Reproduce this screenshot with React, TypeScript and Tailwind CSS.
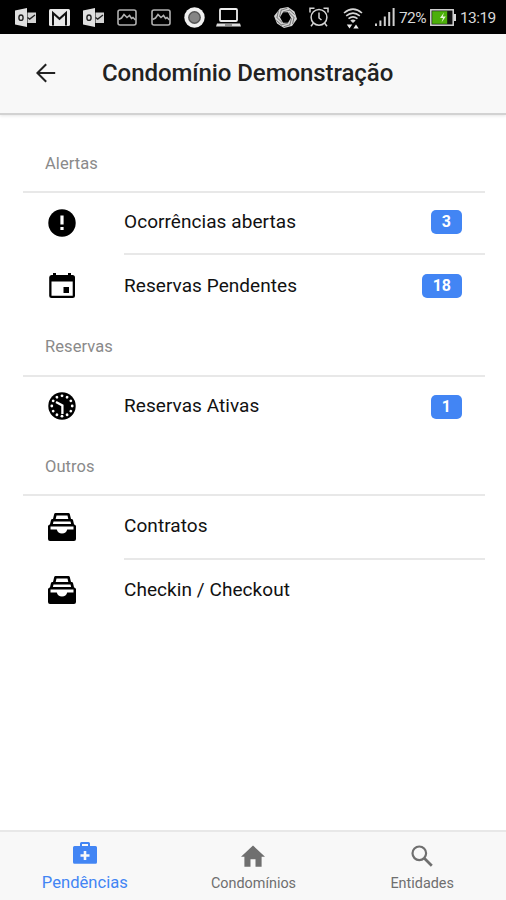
import type { ComponentType, ReactNode } from 'react';
import clsx from 'clsx';

type IconProps = { className?: string };

/* ---------- Status bar icons ---------- */

function OutlookIcon({ className }: IconProps) {
  return (
    <svg viewBox="0 0 21 19" className={className} fill="none">
      <path d="M0 2.5 12 0v19L0 16.5z" fill="#e0e0e0" />
      <path d="M12.5 4.5H21V15h-8.5z" fill="#d4d4d4" />
      <path d="m12.5 9.5 2.2 1.6L20 7" stroke="#222" strokeWidth="1.3" />
      <ellipse cx="6" cy="9.7" rx="2.1" ry="2.7" stroke="#222" strokeWidth="1.4" />
    </svg>
  );
}

function MailIcon({ className }: IconProps) {
  return (
    <svg viewBox="0 0 21 17" className={className}>
      <rect width="21" height="17" rx="1.5" fill="#e8e8e8" />
      <path d="M4 16.5V4l6.5 5.8L17 4v12.5" fill="none" stroke="#111" strokeWidth="2" />
    </svg>
  );
}

function PictureIcon({ className }: IconProps) {
  return (
    <svg viewBox="0 0 20 17" className={className} fill="none" stroke="#b0b0b0" strokeWidth="1.6">
      <rect x="1" y="1" width="18" height="15" rx="2" />
      <path d="m1.5 10.5 3-1.5L7 5.500l3 3 2.500-2 2 3 1.500-1 2.500 2.500" />
    </svg>
  );
}

function RecordIcon({ className }: IconProps) {
  return (
    <svg viewBox="0 0 21 21" className={className}>
      <circle cx="10.5" cy="10.5" r="10.2" fill="#f0f0f0" />
      <circle cx="10.5" cy="10.5" r="6.4" fill="#555" />
      <circle cx="10.5" cy="10.5" r="5" fill="#858585" />
    </svg>
  );
}

function LaptopIcon({ className }: IconProps) {
  return (
    <svg viewBox="0 0 25 19" className={className}>
      <rect x="4" y="1" width="17" height="12" rx="1" fill="none" stroke="#eee" strokeWidth="1.8" />
      <path d="M1 15.5h23l1 3H0z" fill="#ddd" />
      <path d="M9 17h7" stroke="#444" />
    </svg>
  );
}

const blades = [0, 60, 120, 180, 240, 300];

function ApertureIcon({ className }: IconProps) {
  return (
    <svg viewBox="0 0 23 21" className={className} fill="none">
      <path
        fillRule="evenodd"
        d="M6 1.500 14 0l6.500 4.500L23 12l-5 7-8 2-7-4.500L0 9zM9 5.200l-3 5L9 15.800h5l3-5-3-5.600z"
        fill="#d4d4d4"
      />
      {blades.map((deg) => (
        <path
          key={deg}
          d="M7 3.200 13.500 1.200M9 5l7-2"
          stroke="#555"
          strokeWidth="0.7"
          transform={`rotate(${deg} 11.5 10.5)`}
        />
      ))}
    </svg>
  );
}

function AlarmIcon({ className }: IconProps) {
  return (
    <svg viewBox="0 0 20 20" className={className} fill="none" stroke="#d4d4d4" strokeWidth="1.5">
      <circle cx="10" cy="10.3" r="7.9" />
      <path d="M10 5.500V11l2.500 2M1 5.5V1.200h4.500M19 5.5V1.200h-4.500M4.500 16 2 19.200M15.500 16l2.500 3.200" />
    </svg>
  );
}

function WifiIcon({ className }: IconProps) {
  return (
    <svg viewBox="0 0 20 21" className={className} fill="none" stroke="#d6d6d6" strokeWidth="1.6">
      <path d="M1 5Q10-2.800 19 5M3.200 7.900q6.800-5.600 13.600 0M5.500 10.700q4.500-3.600 9 0" />
      <path d="m7.300 12.500 2.700 2.500 2.700-2.500q-2.700-1.800-5.400 0z" fill="#d6d6d6" stroke="none" />
      <path d="M3.800 16.500h5.400L6.500 20.500zM10.300 20.500h5.400L13 16.500z" fill="#eee" stroke="none" />
    </svg>
  );
}

function SignalIcon({ className }: IconProps) {
  return (
    <svg viewBox="0 0 20 18" className={className} fill="#d0d0d0">
      <path d="M0 15.500h2V18H0zM4.400 12.500h2V18h-2zM8.800 8.500h2V18h-2zM13.200 4h2v14h-2zM17.600 0h2v18h-2z" />
    </svg>
  );
}

function BatteryIcon({ className }: IconProps) {
  return (
    <svg viewBox="0 0 26 17" className={className}>
      <rect x="0.8" y="0.8" width="22.4" height="15.4" fill="#111" stroke="#d8d8d8" strokeWidth="1.5" />
      <path d="M24 5h2v7h-2z" fill="#d8d8d8" />
      <path d="M2.200 2.200h15v12.600h-15z" fill="#4caf0a" />
      <path d="m14 3.500-4 5.500h3l-1.500 4.500 4.300-6h-3z" fill="#e8f5d8" />
    </svg>
  );
}

/* ---------- Page icons ---------- */

function BackIcon({ className }: IconProps) {
  return (
    <svg viewBox="0 0 20 20" className={className} fill="none" stroke="#222" strokeWidth="2">
      <path d="M19.200 10H2M10.200 1.200 1.400 10l8.800 8.800" />
    </svg>
  );
}

function AlertIcon({ className }: IconProps) {
  return (
    <svg viewBox="0 0 28 28" className={className}>
      <circle cx="14" cy="14" r="13.7" fill="#000" />
      <path d="M12.400 6.500h3.200v9h-3.200zM12.400 18h3.200v3h-3.200z" fill="#fff" />
    </svg>
  );
}

function CalendarIcon({ className }: IconProps) {
  return (
    <svg viewBox="0 0 28 28" className={className}>
      <path
        fillRule="evenodd"
        d="M5 1h3v2h12V1h3v2h1.500Q27 3 27 5.500v18.500q0 2-2.300 2H3.500q-2.300 0-2.300-2V5.500Q1.200 3 3.500 3H5zM3.500 9.500v14.200h21.200V9.500z"
        fill="#000"
      />
      <path d="M15.500 15H21v6h-5.500z" fill="#000" />
    </svg>
  );
}

const clockTicks = [0, 30, 60, 90, 120, 150, 180, 210, 240, 270, 300, 330];

function ClockIcon({ className }: IconProps) {
  return (
    <svg viewBox="0 0 28 28" className={className}>
      <circle cx="14" cy="14" r="13.7" fill="#000" />
      {clockTicks.map((deg) => (
        <circle key={deg} cx="14" cy="3.8" r="1.4" fill="#fff" transform={`rotate(${deg} 14 14)`} />
      ))}
      <path d="M14.400 22v-8.600L8 10" fill="none" stroke="#fff" strokeWidth="2.3" />
    </svg>
  );
}

function TrayIcon({ className }: IconProps) {
  return (
    <svg viewBox="0 0 28 28" className={className}>
      <path
        fillRule="evenodd"
        d="M7.500 0h13q1 0 1.300 1l1.200 5h.7q1 0 1.300 1l1 4.200 2 1.500V26q0 2-2 2H2q-2 0-2-2V12.700l2-1.500L3 7q.3-1 1.300-1H5l1.200-5Q6.500 0 7.500 0zM8.500 2.500 7.700 6h12.600l-.8-3.500zM5.500 8.500 4.900 11h18.200l-.6-2.500zM2.500 13.600v3h6.300q1 4 5.200 4t5.200-4h6.300v-3z"
        fill="#000"
      />
    </svg>
  );
}

function MedkitIcon({ className }: IconProps) {
  return (
    <svg viewBox="0 0 24 22" className={className}>
      <path
        fillRule="evenodd"
        d="M8.500 0h7q1.500 0 1.500 1.500V4h5.500Q24 4 24 5.500v14.700q0 1.600-1.500 1.600h-21Q0 21.800 0 20.200V5.500Q0 4 1.500 4H7V1.500Q7 0 8.500 0zM9 2v2h6V2zM10.700 9v3.200H7.500v2.600h3.200V18h2.600v-3.200h3.200v-2.600h-3.200V9z"
        fill="currentColor"
      />
    </svg>
  );
}

function HomeIcon({ className }: IconProps) {
  return (
    <svg viewBox="0 0 24 22" className={className}>
      <path d="M12 .5 0 11.700h3.400v10H9.500v-7.500h5v7.500h6.100v-10H24z" fill="currentColor" />
    </svg>
  );
}

function SearchIcon({ className }: IconProps) {
  return (
    <svg viewBox="0 0 22 22" className={className} fill="none" stroke="currentColor">
      <circle cx="8.3" cy="8.3" r="6.8" strokeWidth="2.2" />
      <path d="m13.300 13.300 7.500 7.500" strokeWidth="2.7" />
    </svg>
  );
}

/* ---------- Layout ---------- */

function StatusBar() {
  return (
    <div className="flex h-[34px] shrink-0 items-center justify-between bg-black pl-[15px] pr-[10px] text-[#d8d8d8]">
      <div className="flex items-center">
        <OutlookIcon className="h-[19px] w-[21px]" />
        <MailIcon className="ml-[13px] h-[17px] w-[21px]" />
        <OutlookIcon className="ml-[13px] h-[19px] w-[21px]" />
        <PictureIcon className="ml-[13px] h-[17px] w-5" />
        <PictureIcon className="ml-[14px] h-[17px] w-5" />
        <RecordIcon className="ml-[13px] h-[21px] w-[21px]" />
        <LaptopIcon className="ml-[11px] h-[19px] w-[25px]" />
      </div>
      <div className="flex items-center">
        <ApertureIcon className="h-[21px] w-[23px]" />
        <AlarmIcon className="ml-3 h-5 w-5" />
        <WifiIcon className="ml-[14px] mt-0.5 h-[21px] w-5" />
        <SignalIcon className="ml-3 h-[18px] w-5" />
        <span className="ml-1 w-[31px] pt-[3px] text-[15.5px] tracking-[-0.6px]">72%</span>
        <BatteryIcon className="h-[17px] w-[26px]" />
        <span className="ml-[4px] w-[36px] pt-[3px] text-[15.5px] tracking-[-0.6px]">13:19</span>
      </div>
    </div>
  );
}

interface RowProps {
  icon: ComponentType<IconProps>;
  label: string;
  count?: number;
  divider?: boolean;
  className: string;
}

function Row({ icon: Icon, label, count, divider, className }: RowProps) {
  return (
    <div className={clsx('flex', className)}>
      <div className="flex w-[101px] items-center pb-[3px] pl-[25px]">
        <Icon className="h-7 w-7" />
      </div>
      <div
        className={clsx(
          'flex flex-1 items-center justify-between pr-[23px]',
          divider && 'border-b-2 border-[#e8e8e8]'
        )}
      >
        <span className="pb-[2px] text-[19px] tracking-[0.06px] text-[#111]">{label}</span>
        {count !== undefined && (
          <span className="mb-[2px] rounded-[5px] bg-[#4285f4] px-[11px] text-center text-[16px] leading-[24px] font-bold text-white">
            {count}
          </span>
        )}
      </div>
    </div>
  );
}

function Group({ title, className, children }: { title: string; className: string; children: ReactNode }) {
  return (
    <section>
      <h2
        className={clsx(
          'flex items-center border-b-2 border-[#e8e8e8] pl-[22px] text-[16.5px] tracking-[0.08px] text-[#8a8a8a]',
          className
        )}
      >
        {title}
      </h2>
      {children}
    </section>
  );
}

export default function App() {
  return (
    <div className="flex h-[900px] w-[506px] flex-col overflow-hidden bg-white font-[Roboto,sans-serif]">
      <StatusBar />

      <header className="z-10 flex h-[81px] shrink-0 items-center border-b-2 border-[#d2d2d2] bg-[#f8f8f8] pb-[2px] pl-9 shadow-[0_1px_3px_rgba(0,0,0,0.1)]">
        <BackIcon className="h-5 w-5" />
        <h1 className="ml-[46px] text-[24px] font-medium tracking-[-0.07px] text-[#222]">Condomínio Demonstração</h1>
      </header>

      <main className="flex-1 pt-[19px] pr-[21px] pl-[23px]">
        <Group title="Alertas" className="h-[59px] pt-1">
          <Row icon={AlertIcon} label="Ocorrências abertas" count={3} divider className="h-[62px]" />
          <Row icon={CalendarIcon} label="Reservas Pendentes" count={18} className="h-[63px] pt-px" />
        </Group>
        <Group title="Reservas" className="h-[59px] pt-0.5">
          <Row icon={ClockIcon} label="Reservas Ativas" count={1} className="h-[61px]" />
        </Group>
        <Group title="Outros" className="h-[58px] pt-0.5">
          <Row icon={TrayIcon} label="Contratos" divider className="h-[64px]" />
          <Row icon={TrayIcon} label="Checkin / Checkout" className="h-[63px]" />
        </Group>
      </main>

      <nav className="grid h-[70px] shrink-0 grid-cols-3 border-t-2 border-[#e8e8e8] bg-[#f8f8f8] text-[#6f6f6f]">
        <a className="flex flex-col items-center pt-[10px] pl-px text-[#4285f4]">
          <MedkitIcon className="h-[22px] w-6" />
          <span className="mt-[9px] text-[16.6px] leading-5">Pendências</span>
        </a>
        <a className="flex flex-col items-center pt-[13px] pl-px">
          <HomeIcon className="h-[22px] w-6" />
          <span className="mt-[7px] text-[14.4px] leading-5">Condomínios</span>
        </a>
        <a className="flex flex-col items-center pt-[13px] pl-px">
          <SearchIcon className="h-[22px] w-[22px]" />
          <span className="mt-[7px] text-[14.4px] leading-5">Entidades</span>
        </a>
      </nav>
    </div>
  );
}
